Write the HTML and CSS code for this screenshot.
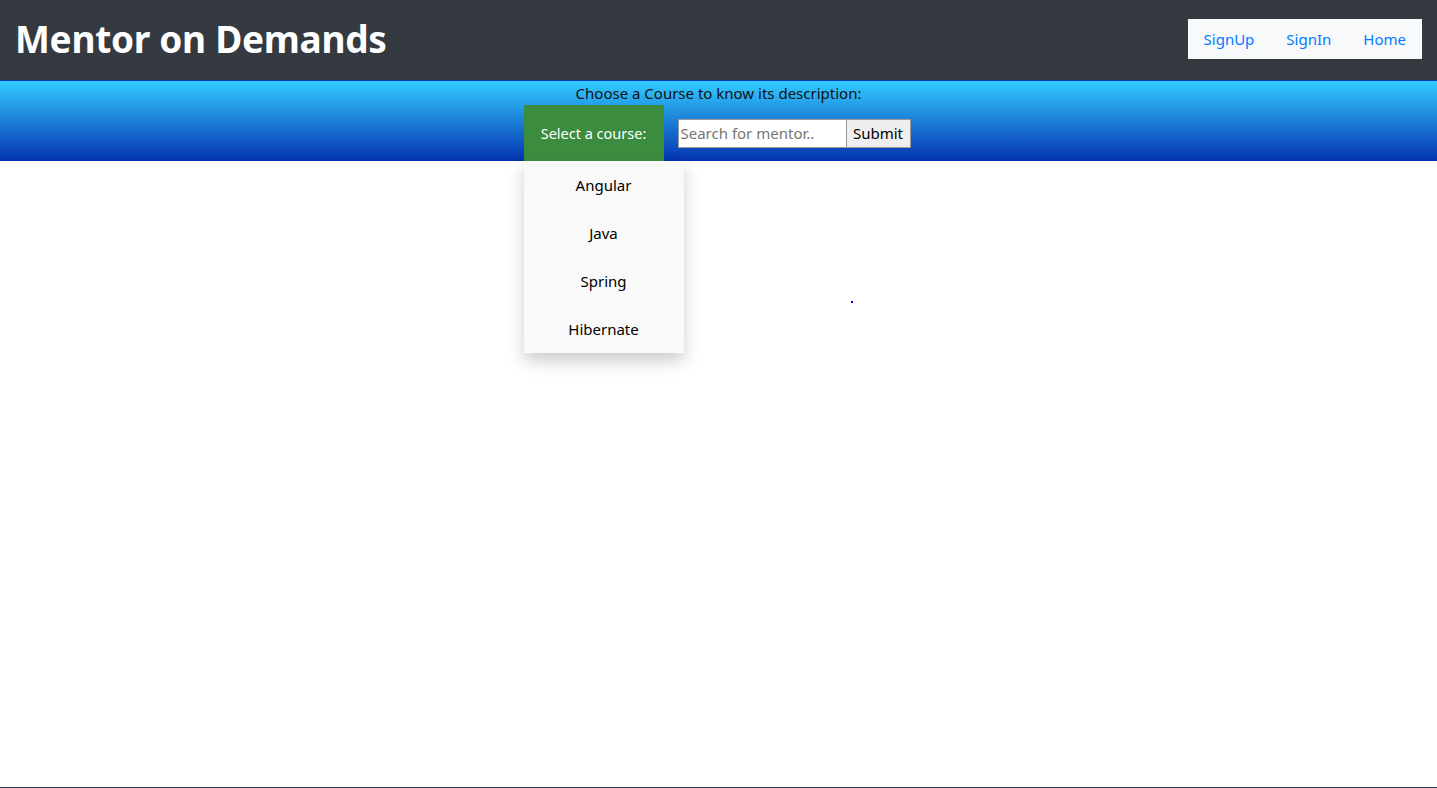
FILE: index.html
```html
<!DOCTYPE html>
<html lang="en">
<head>
<meta charset="utf-8">
<title>Mentor on Demands</title>
<link rel="stylesheet" href="styles.css">
</head>
<body>
<header class="topbar">
  <h1 class="brand">Mentor on Demands</h1>
  <nav class="nav">
    <a href="#" class="nav-link">SignUp</a>
    <a href="#" class="nav-link">SignIn</a>
    <a href="#" class="nav-link">Home</a>
  </nav>
</header>
<section class="band">
  <p class="band-title">Choose a Course to know its description:</p>
  <div class="band-row">
    <div class="dropdown">
      <button class="dropbtn">Select a course:</button>
      <div class="dropdown-menu">
        <a href="#" class="dropdown-item">Angular</a>
        <a href="#" class="dropdown-item">Java</a>
        <a href="#" class="dropdown-item">Spring</a>
        <a href="#" class="dropdown-item">Hibernate</a>
      </div>
    </div>
    <form class="search">
      <input class="search-input" type="text" placeholder="Search for mentor..">
      <button class="search-btn" type="button">Submit</button>
    </form>
  </div>
</section>
<main class="content">
  <span class="dot"></span>
</main>
<footer class="footer"></footer>
</body>
</html>
```
FILE: styles.css
```css
* { box-sizing: border-box; }
html, body { margin: 0; padding: 0; }
body {
  font-family: "Noto Sans", "Open Sans", sans-serif;
  font-size: 16px;
  color: #212529;
  background: #fff;
  overflow: hidden;
}
.topbar {
  height: 80px;
  background: #343a40;
  display: flex;
  align-items: center;
  justify-content: space-between;
  padding: 0 15px 0 15px;
}
.brand {
  margin: 0 0 3px 0;
  color: #fff;
  font-size: 37px;
  font-weight: 700;
  letter-spacing: -0.3px;
}
.nav {
  display: flex;
  background: #f8f9fa;
  height: 40px;
  align-items: center;
  margin-top: -2px;
}
.nav-link {
  color: #007bff;
  text-decoration: none;
  font-size: 15px;
  padding: 0 16px;
}
.band {
  height: 81px;
  border-top: 1px solid #0a37b0;
  background: linear-gradient(to bottom, #33ccff, #0433b0);
  text-align: center;
}
.band-title {
  margin: 0;
  padding-top: 2px;
  font-size: 15px;
  line-height: 20px;
  color: #111;
}
.band-row {
  display: flex;
  justify-content: center;
  align-items: center;
  gap: 14px;
  margin-top: 2px;
  margin-left: -3px;
}
.dropdown { position: relative; }
.dropbtn {
  display: block;
  width: 140px;
  height: 56px;
  background: #3c8c40;
  color: #fff;
  border: none;
  font-family: inherit;
  font-size: 14.5px;
  padding: 0;
}
.dropdown-menu {
  position: absolute;
  top: 56px;
  left: 0;
  width: 160px;
  background: #f9f9f9;
  box-shadow: 0 8px 16px rgba(0, 0, 0, 0.2);
  z-index: 2;
}
.dropdown-item {
  display: block;
  padding: 12px 16px;
  line-height: 24px;
  color: #000;
  text-decoration: none;
  font-size: 15px;
  text-align: center;
}
.search { display: flex; margin: 0; }
.search-input {
  width: 168px;
  height: 29px;
  border: 1px solid #999;
  border-right: none;
  background: #fff;
  font-family: inherit;
  font-size: 15px;
  padding: 0 2px;
  margin: 0;
}
.search-input::placeholder { color: #757575; }
.search-btn {
  width: 65px;
  height: 29px;
  background: #efefef;
  border: 1px solid #999;
  font-family: inherit;
  font-size: 15px;
  color: #000;
  padding: 0;
  margin: 0;
}
.content {
  position: relative;
  height: 626px;
}
.dot {
  position: absolute;
  left: 851px;
  top: 140px;
  width: 2px;
  height: 2px;
  background: #0000ff;
}
.footer {
  height: 20px;
  background: #2c3e50;
}
```
